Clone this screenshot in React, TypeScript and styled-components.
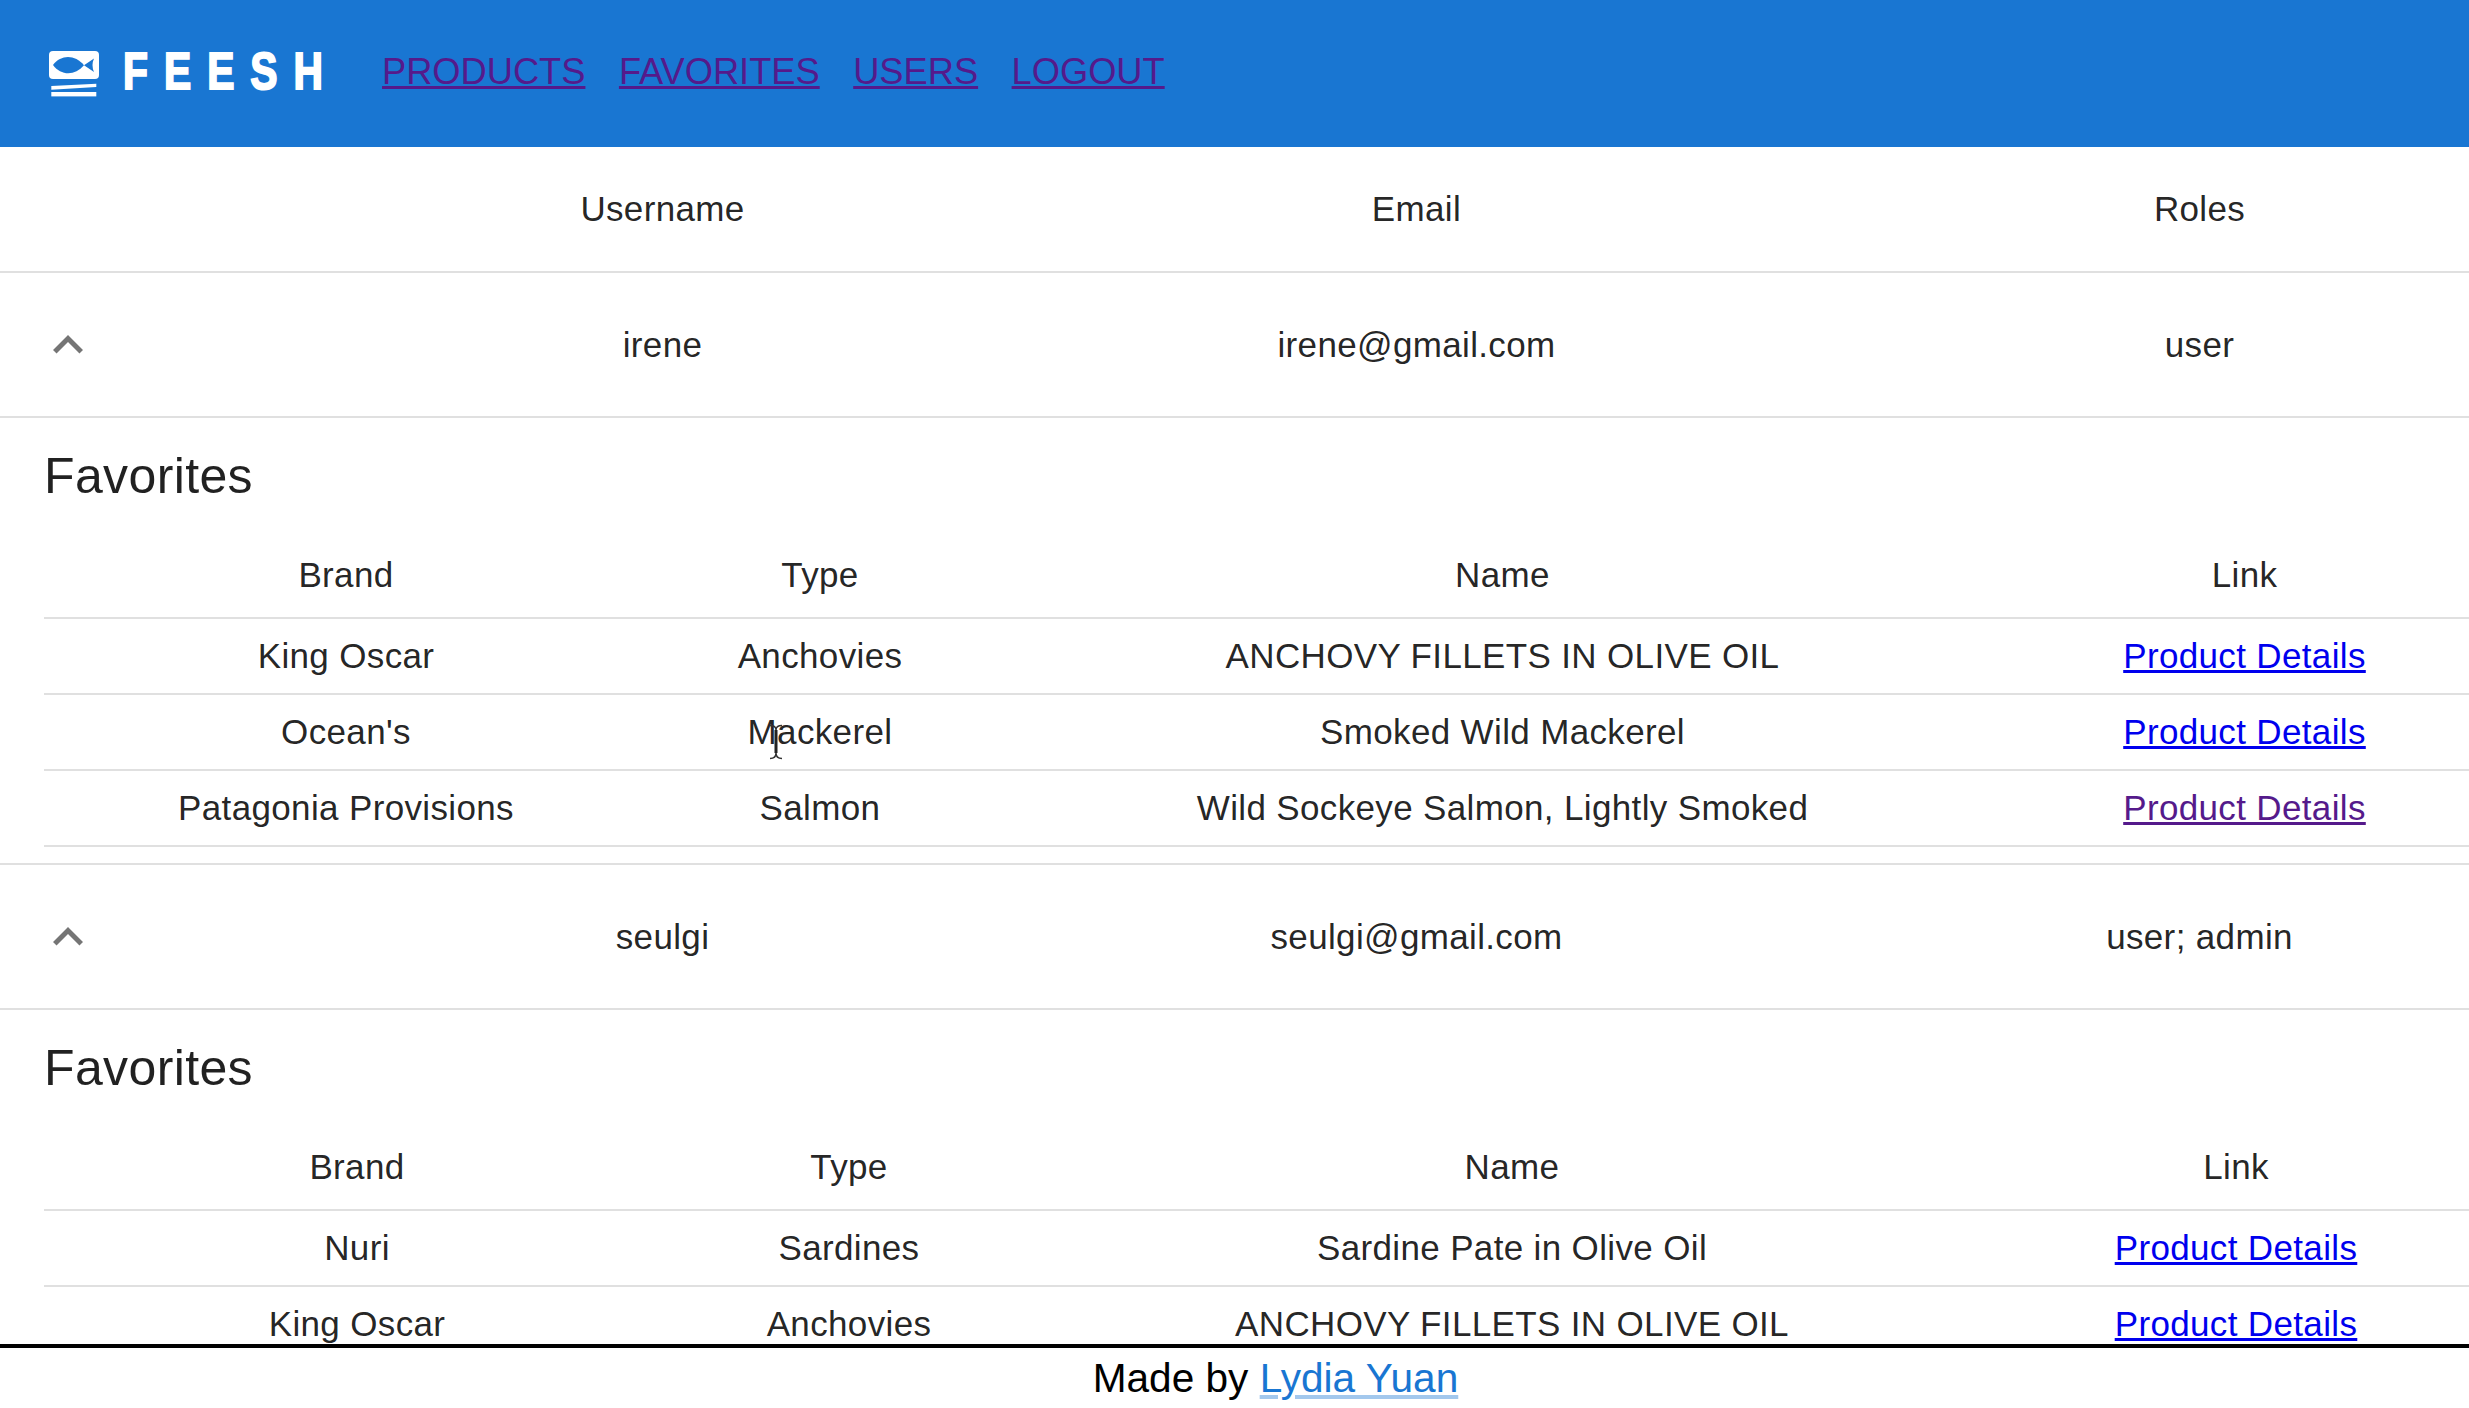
import styled, { createGlobalStyle } from 'styled-components';

const GlobalStyle = createGlobalStyle`
    html, body {
        margin: 0;
        padding: 0;
        height: 100%;
        overflow: hidden;
        background: #fff;
        font-family: "Liberation Sans", Arial, sans-serif;
    }
`;

const Page = styled.div`
    display: flex;
    flex-direction: column;
    height: 100vh;
    overflow: hidden;
`;

const TopBar = styled.header`
    flex: 0 0 147px;
    display: flex;
    align-items: center;
    padding-left: 49px;
    background: #1976d2;
`;

const Brand = styled.div`
    display: flex;
    align-items: center;
    width: 333px;
    height: 52px;
    gap: 24px;
`;

const Wordmark = styled.span`
    display: block;
    width: 195px;
    margin-top: -4px;
    font-size: 51px;
    font-weight: 700;
    line-height: 1;
    letter-spacing: 20px;
    color: #fff;
    white-space: nowrap;
    -webkit-text-stroke: 2px #fff;
    transform: scaleX(0.8);
    transform-origin: left center;
`;

const Nav = styled.nav`
    display: flex;
    gap: 33.5px;
    margin-top: -3px;
`;

const NavLink = styled.a`
    font-size: 36.25px;
    color: #551a8b;
    text-decoration: underline;
`;

const Main = styled.main`
    position: relative;
    flex: 1;
    min-height: 0;
    overflow: hidden;
`;

const Table = styled.table`
    width: 100%;
    table-layout: fixed;
    border-collapse: collapse;
    color: rgba(0, 0, 0, 0.87);
    font-size: 35px;
    letter-spacing: 0.01em;
`;

const InnerTable = styled(Table)`
    width: 2432px;
`;

const Col = styled.col<{ $w: number }>`
    width: ${(props) => props.$w}px;
`;

const HeadRow = styled.tr`
    height: 125px;
`;

const UserRow = styled.tr`
    height: 145px;
`;

const InnerHeadRow = styled.tr`
    height: 83px;
`;

const InnerRow = styled.tr`
    height: 76px;
`;

const Cell = styled.td`
    padding: 0;
    text-align: center;
    font-weight: 400;
    border-bottom: 2px solid #e0e0e0;
`;

const HeadCell = styled(Cell).attrs({ as: 'th' })``;

const InnerHeadCell = styled(HeadCell)`
    padding-bottom: 3px;
`;

const DetailCell = styled.td`
    padding: 0;
    border-bottom: 2px solid #e0e0e0;
`;

const Favorites = styled.div`
    margin: 18px 0 16px 44px;
`;

const FavoritesTitle = styled.h6`
    margin: 0 0 19px;
    font-size: 50px;
    font-weight: 400;
    line-height: 80px;
    letter-spacing: 0.0075em;
    color: rgba(0, 0, 0, 0.87);
`;

const Chevron = styled.svg`
    display: block;
    width: 60px;
    height: 60px;
    margin-left: 38px;
    fill: rgba(0, 0, 0, 0.54);
`;

const DetailsLink = styled.a<{ $visited?: boolean }>`
    color: ${(props) => (props.$visited ? '#551a8b' : '#0000ee')};
    text-decoration: underline;
`;

const TextCursor = styled.svg`
    position: absolute;
    left: 769px;
    top: 577px;
    width: 14px;
    height: 36px;
`;

const Footer = styled.footer`
    flex: 0 0 60px;
    border-top: 4px solid #000;
    padding-left: 82px;
    text-align: center;
    font-size: 40.6px;
    line-height: 60px;
    color: #000;
`;

const AuthorLink = styled.a`
    color: #1976d2;
    text-decoration: underline;
    text-decoration-color: rgba(25, 118, 210, 0.4);
`;

type Fish = { brand: string; type: string; name: string; visited?: boolean };

type User = {
    username: string;
    email: string;
    roles: string;
    widths: number[];
    favorites: Fish[];
};

const users: User[] = [
    {
        username: 'irene',
        email: 'irene@gmail.com',
        roles: 'user',
        widths: [604, 344, 1021, 463],
        favorites: [
            { brand: 'King Oscar', type: 'Anchovies', name: 'ANCHOVY FILLETS IN OLIVE OIL' },
            { brand: "Ocean's", type: 'Mackerel', name: 'Smoked Wild Mackerel' },
            { brand: 'Patagonia Provisions', type: 'Salmon', name: 'Wild Sockeye Salmon, Lightly Smoked', visited: true },
        ],
    },
    {
        username: 'seulgi',
        email: 'seulgi@gmail.com',
        roles: 'user; admin',
        widths: [626, 358, 968, 480],
        favorites: [
            { brand: 'Nuri', type: 'Sardines', name: 'Sardine Pate in Olive Oil' },
            { brand: 'King Oscar', type: 'Anchovies', name: 'ANCHOVY FILLETS IN OLIVE OIL' },
        ],
    },
];

function Logo() {
    return (
        <svg width="50" height="46" viewBox="0 0 50 46" aria-hidden="true">
            <rect x="0" y="0" width="50" height="28" rx="4" fill="#fff" />
            <path d="M4 14 C12 3.3 26 3.3 35 14.3 C26 25 12 25 4 14 Z" fill="#1976d2" />
            <path d="M35 14.3 L45 7.5 Q42 14 45 21 Z" fill="#1976d2" />
            <path d="M2.3 35 L47.3 32.7 L47.3 36 L2.3 38.7 Z" fill="#fff" />
            <rect x="2.3" y="41" width="45" height="4.4" fill="#fff" />
        </svg>
    );
}

function ArrowUp() {
    return (
        <Chevron viewBox="0 0 24 24" aria-hidden="true">
            <path d="M7.41 15.41 12 10.83l4.59 4.58L18 14l-6-6-6 6z" />
        </Chevron>
    );
}

function UserRows({ user }: { user: User }) {
    return (
        <>
            <UserRow>
                <Cell>
                    <ArrowUp />
                </Cell>
                <Cell>{user.username}</Cell>
                <Cell>{user.email}</Cell>
                <Cell>{user.roles}</Cell>
            </UserRow>
            <tr>
                <DetailCell colSpan={4}>
                    <Favorites>
                        <FavoritesTitle>Favorites</FavoritesTitle>
                        <InnerTable>
                            <colgroup>
                                {user.widths.map((w, i) => (
                                    <Col key={i} $w={w} />
                                ))}
                            </colgroup>
                            <thead>
                                <InnerHeadRow>
                                    <InnerHeadCell>Brand</InnerHeadCell>
                                    <InnerHeadCell>Type</InnerHeadCell>
                                    <InnerHeadCell>Name</InnerHeadCell>
                                    <InnerHeadCell>Link</InnerHeadCell>
                                </InnerHeadRow>
                            </thead>
                            <tbody>
                                {user.favorites.map((fish) => (
                                    <InnerRow key={fish.name}>
                                        <Cell>{fish.brand}</Cell>
                                        <Cell>{fish.type}</Cell>
                                        <Cell>{fish.name}</Cell>
                                        <Cell>
                                            <DetailsLink href="#" $visited={fish.visited}>
                                                Product Details
                                            </DetailsLink>
                                        </Cell>
                                    </InnerRow>
                                ))}
                            </tbody>
                        </InnerTable>
                    </Favorites>
                </DetailCell>
            </tr>
        </>
    );
}

export default function App() {
    return (
        <Page>
            <GlobalStyle />
            <TopBar>
                <Brand>
                    <Logo />
                    <Wordmark>FEESH</Wordmark>
                </Brand>
                <Nav>
                    <NavLink href="#">PRODUCTS</NavLink>
                    <NavLink href="#">FAVORITES</NavLink>
                    <NavLink href="#">USERS</NavLink>
                    <NavLink href="#">LOGOUT</NavLink>
                </Nav>
            </TopBar>
            <Main>
                <Table>
                    <colgroup>
                        <Col $w={422} />
                        <Col $w={481} />
                        <Col $w={1027} />
                        <Col $w={539} />
                    </colgroup>
                    <thead>
                        <HeadRow>
                            <HeadCell />
                            <HeadCell>Username</HeadCell>
                            <HeadCell>Email</HeadCell>
                            <HeadCell>Roles</HeadCell>
                        </HeadRow>
                    </thead>
                    <tbody>
                        {users.map((user) => (
                            <UserRows key={user.username} user={user} />
                        ))}
                    </tbody>
                </Table>
                <TextCursor viewBox="0 0 14 36" aria-hidden="true">
                    <path d="M1 1.5 Q7 1.5 7 6 Q7 1.5 13 1.5 M1 34.5 Q7 34.5 7 29 Q7 34.5 13 34.5" fill="none" stroke="#333" strokeWidth="1.5" />
                    <rect x="5.5" y="6" width="3" height="23" fill="#222" />
                </TextCursor>
            </Main>
            <Footer>
                Made by <AuthorLink href="#">Lydia Yuan</AuthorLink>
            </Footer>
        </Page>
    );
}
